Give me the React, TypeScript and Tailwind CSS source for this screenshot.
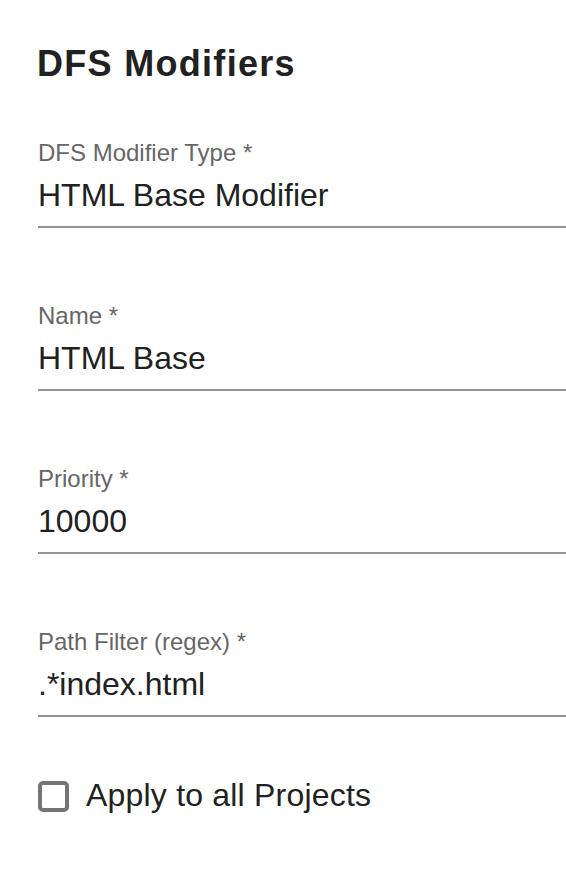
import React from 'react';

interface FieldProps {
  label: string;
  value: string;
}

const Field: React.FC<FieldProps> = ({ label, value }) => (
  <div className="flex flex-col">
    <label className="h-[24px] text-[24px] leading-[24px] text-[#666666]">{label}</label>
    <div className="mt-[10px] h-[40px] text-[32px] leading-[40px] text-[#212121]">{value}</div>
    <div className="mt-[11px] h-[2px] bg-[#949494]" />
  </div>
);

const fields: FieldProps[] = [
  { label: 'DFS Modifier Type *', value: 'HTML Base Modifier' },
  { label: 'Name *', value: 'HTML Base' },
  { label: 'Priority *', value: '10000' },
  { label: 'Path Filter (regex) *', value: '.*index.html' },
];

export default function App() {
  return (
    <div className="min-h-[872px] w-[566px] bg-white pl-[38px] pt-[44px] font-['Liberation_Sans',Arial,sans-serif]">
      <h1 className="-ml-[1px] h-[40px] text-[36px] font-bold leading-[40px] tracking-[1.3px] text-[#212121]">
        DFS Modifiers
      </h1>
      <div className="mt-[57px] flex flex-col gap-[76px]">
        {fields.map((f) => (
          <Field key={f.label} {...f} />
        ))}
      </div>
      <div className="mt-[58px] flex items-start gap-[17px]">
        <div className="mt-[6px] h-[31px] w-[31px] rounded-[5px] border-[4px] border-[#757575]" />
        <span className="h-[40px] text-[32px] leading-[40px] tracking-[0.2px] text-[#212121]">Apply to all Projects</span>
      </div>
    </div>
  );
}
